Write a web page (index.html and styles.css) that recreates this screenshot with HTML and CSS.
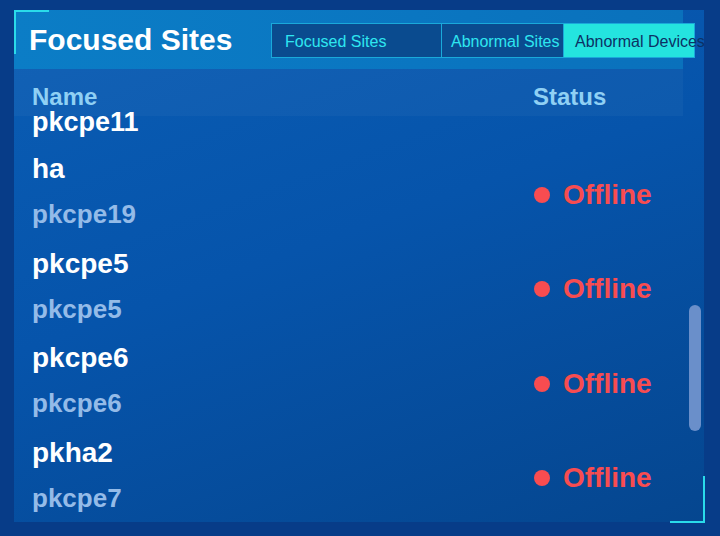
FILE: index.html
```html
<!DOCTYPE html>
<html lang="en">
<head>
<meta charset="utf-8">
<title>Focused Sites</title>
<link rel="stylesheet" href="styles.css">
</head>
<body>
<section class="panel">
  <span class="corner corner-tl"></span>
  <span class="corner corner-br"></span>
  <div class="main">
    <header class="titlebar">
      <h1 class="title">Focused Sites</h1>
      <nav class="tabs">
        <button class="tab tab-first">Focused Sites</button>
        <button class="tab tab-second">Abnormal Sites</button>
        <button class="tab tab-active">Abnormal Devices</button>
      </nav>
    </header>
    <div class="thead">
      <div class="col-name">Name</div>
      <div class="col-status">Status</div>
    </div>
    <div class="list">
      <div class="rows">
        <div class="line line-main line-partial">pkcpe11</div>
        <div class="group">
          <div class="names">
            <div class="line line-main">ha</div>
            <div class="line line-sub">pkcpe19</div>
          </div>
          <div class="status"><span class="dot"></span>Offline</div>
        </div>
        <div class="group">
          <div class="names">
            <div class="line line-main">pkcpe5</div>
            <div class="line line-sub">pkcpe5</div>
          </div>
          <div class="status"><span class="dot"></span>Offline</div>
        </div>
        <div class="group">
          <div class="names">
            <div class="line line-main">pkcpe6</div>
            <div class="line line-sub">pkcpe6</div>
          </div>
          <div class="status"><span class="dot"></span>Offline</div>
        </div>
        <div class="group">
          <div class="names">
            <div class="line line-main">pkha2</div>
            <div class="line line-sub">pkcpe7</div>
          </div>
          <div class="status"><span class="dot"></span>Offline</div>
        </div>
      </div>
    </div>
  </div>
  <div class="gutter">
    <div class="thumb"></div>
  </div>
</section>
</body>
</html>
```
FILE: styles.css
```css
* {
  box-sizing: border-box;
}

html, body {
  margin: 0;
  padding: 0;
}

body {
  width: 720px;
  height: 536px;
  overflow: hidden;
  background: #073c88;
  font-family: "Liberation Sans", Arial, Helvetica, sans-serif;
  padding: 10px 0 0 14px;
}

/* panel */
.panel {
  position: relative;
  width: 690px;
  height: 512px;
  display: flex;
  background: linear-gradient(160deg, #0a5db4 0%, #0654ab 45%, #05468f 100%);
}

.corner {
  position: absolute;
  width: 35px;
  height: 44px;
  border-color: #2adbea;
  border-style: solid;
  border-width: 0;
}

.corner-tl {
  left: 0;
  top: 0;
  border-top-width: 2px;
  border-left-width: 2px;
}

.corner-br {
  right: -1px;
  bottom: -1px;
  width: 35px;
  height: 47px;
  border-bottom-width: 2px;
  border-right-width: 2px;
}

.main {
  width: 669px;
  display: flex;
  flex-direction: column;
}

/* title bar with tabs */
.titlebar {
  height: 60px;
  display: flex;
  align-items: center;
  padding-left: 15px;
  padding-top: 1px;
  background: linear-gradient(90deg, #0b7dc6 0%, #0a76c1 60%, #0a71bc 100%);
}

.title {
  margin: 0;
  font-size: 30px;
  font-weight: bold;
  color: #ffffff;
  line-height: 36px;
  white-space: nowrap;
}

.tabs {
  margin-left: auto;
  margin-right: -12px;
  margin-top: 1px;
  display: flex;
  height: 35px;
  border: 1px solid #1aa9da;
}

.tab {
  height: 100%;
  margin: 0;
  border: 0;
  border-left: 1px solid #1aa9da;
  background: #0a4b8f;
  color: #2ee6f0;
  font-family: inherit;
  font-size: 16px;
  text-align: left;
  white-space: nowrap;
  padding: 3px 0 0 0;
  overflow: visible;
}

.tab-first {
  border-left: 0;
  width: 169px;
  padding-left: 13px;
}

.tab-second {
  width: 122px;
  padding-left: 9px;
}

.tab-active {
  width: 131px;
  padding-left: 11px;
  background: #24e4df;
  color: #0c3165;
}

/* column headers */
.thead {
  height: 47px;
  padding-top: 14px;
  display: flex;
  background: rgba(255, 255, 255, 0.035);
  font-size: 24px;
  line-height: 28px;
  font-weight: bold;
  color: #8fd0f4;
}

.col-name {
  flex: 1;
  padding-left: 18px;
}

.col-status {
  width: 150px;
}

/* rows */
.list {
  flex: 1;
}

.rows {
  margin-top: -16px;
}

.line {
  font-weight: bold;
  white-space: nowrap;
}

.line-main {
  font-size: 28px;
  line-height: 46px;
  color: #ffffff;
}

.line-sub {
  font-size: 26px;
  line-height: 44px;
  color: #94bbe8;
}

.line-partial {
  font-size: 27px;
  line-height: 44px;
  padding-left: 18px;
}

.group {
  display: flex;
  height: 94.5px;
  padding-top: 2px;
}

.names {
  flex: 1;
  padding-left: 18px;
}

.status {
  width: 150px;
  display: flex;
  align-items: center;
  padding-top: 5px;
  font-size: 28px;
  font-weight: bold;
  color: #f84c50;
}

.dot {
  width: 16px;
  height: 16px;
  border-radius: 50%;
  background: #f84c50;
  margin-left: 1px;
  margin-right: 13px;
  flex: none;
}

/* scroll gutter */
.gutter {
  width: 21px;
  padding-top: 295px;
  padding-left: 6px;
}

.thumb {
  width: 12px;
  height: 126px;
  border-radius: 6px;
  background: #6a8fca;
}
```
